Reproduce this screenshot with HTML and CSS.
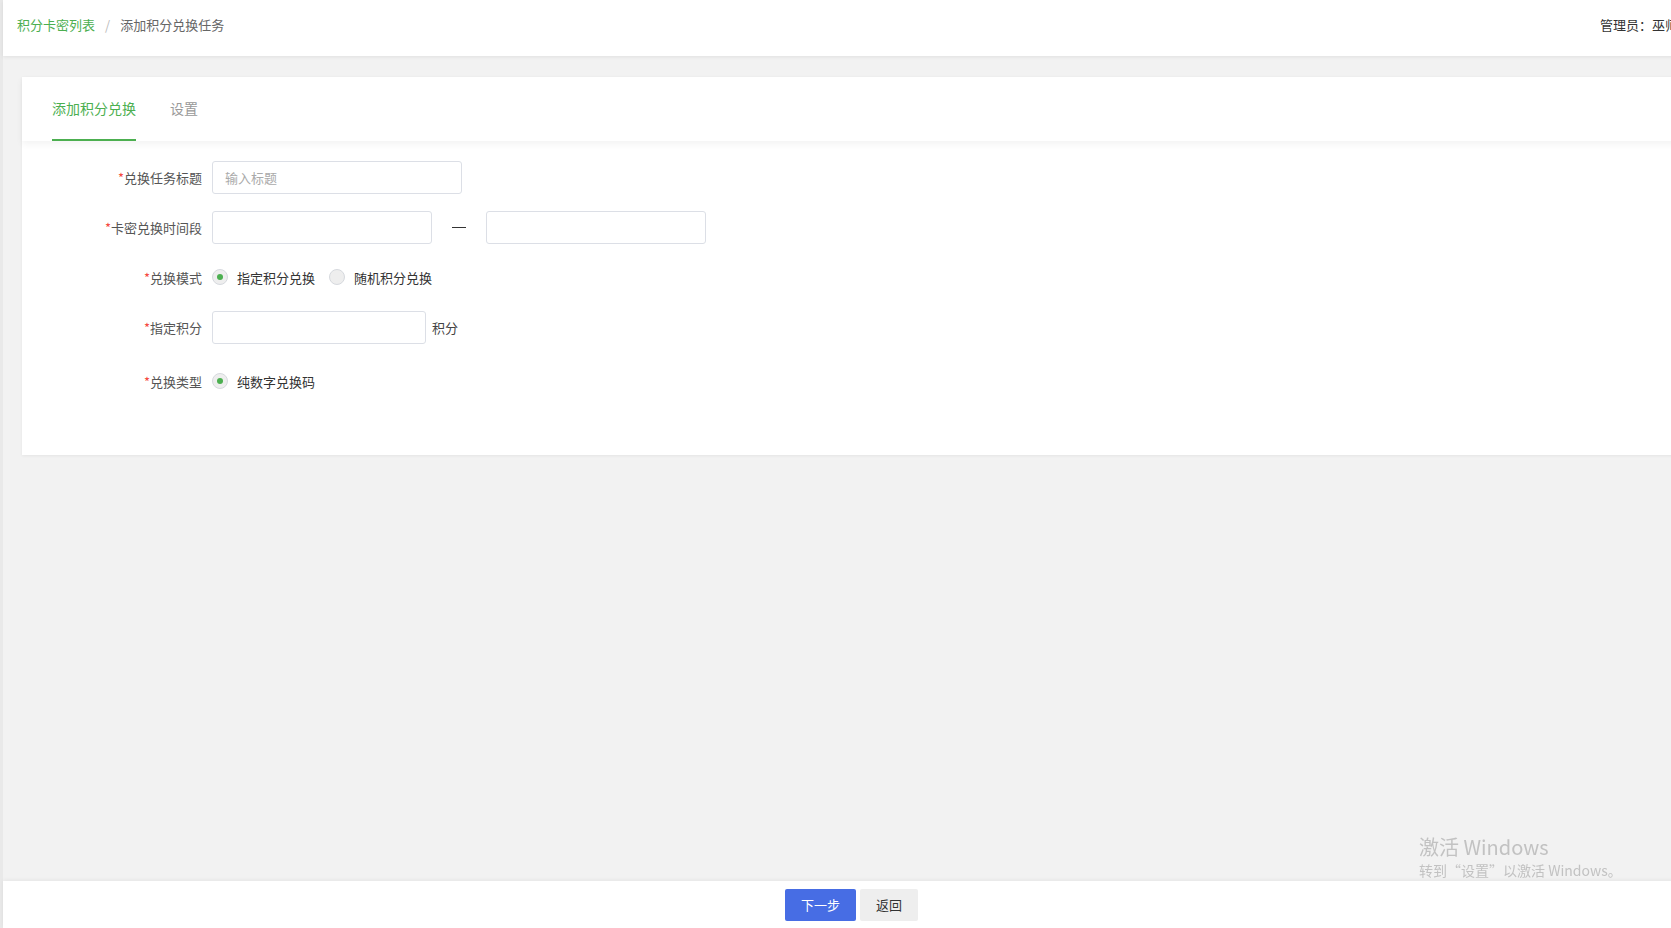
FILE: index.html
```html
<!DOCTYPE html>
<html lang="zh-CN">
  <head>
    <meta charset="UTF-8" />
    <meta name="viewport" content="width=device-width, initial-scale=1.0" />
    <link rel="stylesheet" href="styles.css">
    <title>添加积分兑换任务</title>
  </head>
  <body>
    <div class="app">
      <header class="top-bar">
        <div class="breadcrumb">
          <a class="crumb-link" href="#">积分卡密列表</a>
          <span class="crumb-sep">/</span>
          <span class="crumb-current">添加积分兑换任务</span>
        </div>
        <div class="admin">管理员：<span class="admin-name">巫师</span></div>
      </header>

      <main class="main">
        <div class="card">
          <div class="tabs">
            <div class="tab active">添加积分兑换</div>
            <div class="tab">设置</div>
          </div>
          <form class="form">
            <div class="form-item">
              <label class="form-label"><i>*</i>兑换任务标题</label>
              <input class="input input-title" type="text" placeholder="输入标题" />
            </div>
            <div class="form-item">
              <label class="form-label"><i>*</i>卡密兑换时间段</label>
              <input class="input input-date" type="text" />
              <span class="range-sep"></span>
              <input class="input input-date" type="text" />
            </div>
            <div class="form-item radio-item">
              <label class="form-label"><i>*</i>兑换模式</label>
              <span class="radio checked"></span>
              <span class="radio-text">指定积分兑换</span>
              <span class="radio"></span>
              <span class="radio-text">随机积分兑换</span>
            </div>
            <div class="form-item">
              <label class="form-label"><i>*</i>指定积分</label>
              <input class="input input-points" type="text" />
              <span class="unit">积分</span>
            </div>
            <div class="form-item radio-item last">
              <label class="form-label"><i>*</i>兑换类型</label>
              <span class="radio checked"></span>
              <span class="radio-text">纯数字兑换码</span>
            </div>
          </form>
        </div>
      </main>

      <footer class="footer">
        <button class="btn btn-primary" type="button">下一步</button>
        <button class="btn btn-default" type="button">返回</button>
      </footer>
    </div>

    <div class="watermark">
      <p class="wm-title">激活 Windows</p>
      <p class="wm-sub">转到“设置”以激活 Windows。</p>
    </div>
  </body>
</html>
```

FILE: styles.css
```css
* {
  margin: 0;
  padding: 0;
  box-sizing: border-box;
  font-family: "Noto Sans CJK SC", "Noto Sans", sans-serif;
}
body {
  height: 100vh;
  overflow: hidden;
  background: #f2f2f2;
}
.app {
  width: 1700px;
  height: 100vh;
  display: flex;
  flex-flow: column;
  border-left: 3px solid #e9e9e9;
}
.top-bar {
  height: 56px;
  flex: none;
  display: flex;
  justify-content: space-between;
  padding: 15px 22px 0 14px;
  background: #fff;
  box-shadow: 0 1px 4px rgba(0, 0, 0, 0.08);
  position: relative;
  z-index: 2;
  font-size: 13px;
  line-height: 20px;
}
.breadcrumb {
  display: flex;
  color: #666;
}
.crumb-link {
  color: #4caf50;
  text-decoration: none;
}
.crumb-sep {
  color: #bbb;
  margin: 0 10px;
}
.admin {
  color: #333;
}
.main {
  flex: 1;
  padding: 21px 0 0 19px;
}
.card {
  background: #fff;
  box-shadow: 0 1px 3px rgba(0, 0, 0, 0.06);
}
.tabs {
  height: 64px;
  display: flex;
  gap: 34px;
  padding-left: 30px;
  box-shadow: 0 3px 7px rgba(0, 0, 0, 0.05);
}
.tab {
  font-size: 14px;
  color: #999;
  line-height: 62px;
  border-bottom: 2px solid transparent;
}
.tab.active {
  color: #4caf50;
  border-bottom-color: #4caf50;
}
.form {
  display: flex;
  flex-flow: column;
  padding: 20px 0 58px;
}
.form-item {
  display: flex;
  align-items: center;
  height: 33px;
  margin-bottom: 17px;
  font-size: 13px;
  color: #333;
}
.radio-item {
  height: 32px;
  margin-bottom: 18px;
}
.radio-item.last {
  margin-top: 4px;
  margin-bottom: 0;
}
.form-label {
  width: 180px;
  text-align: right;
  margin-right: 10px;
  color: #555;
}
.form-label i {
  font-style: normal;
  color: #f5493f;
}
.input {
  height: 33px;
  border: 1px solid #dcdfe6;
  border-radius: 3px;
  padding: 0 12px;
  font-size: 13px;
  color: #333;
  outline: none;
  background: #fff;
}
.input::placeholder {
  color: #aaa;
}
.input-title {
  width: 250px;
}
.input-date {
  width: 220px;
}
.input-points {
  width: 214px;
}
.range-sep {
  width: 14px;
  height: 1px;
  background: #333;
  margin: 0 20px;
}
.unit {
  margin-left: 6px;
  color: #444;
}
.radio {
  width: 16px;
  height: 16px;
  border-radius: 50%;
  border: 1px solid #d6d9de;
  background: #eeeeee;
  display: flex;
  align-items: center;
  justify-content: center;
}
.radio.checked::after {
  content: "";
  width: 6px;
  height: 6px;
  border-radius: 50%;
  background: #4caf50;
}
.radio-text {
  margin: 0 14px 0 9px;
  color: #333;
}
.footer {
  height: 47px;
  flex: none;
  display: flex;
  justify-content: center;
  align-items: center;
  gap: 4px;
  background: #fff;
  box-shadow: 0 -1px 4px rgba(0, 0, 0, 0.06);
}
.btn {
  height: 32px;
  border: none;
  border-radius: 2px;
  font-size: 13px;
  cursor: pointer;
}
.btn-primary {
  width: 71px;
  background: #476de4;
  color: #fff;
}
.btn-default {
  width: 58px;
  background: #eeeeee;
  color: #333;
}
.watermark {
  position: fixed;
  left: 1419px;
  top: 834px;
  color: #c2c2c2;
}
.wm-title {
  font-size: 20px;
  line-height: 26px;
}
.wm-sub {
  font-size: 14px;
  line-height: 20px;
}
```
